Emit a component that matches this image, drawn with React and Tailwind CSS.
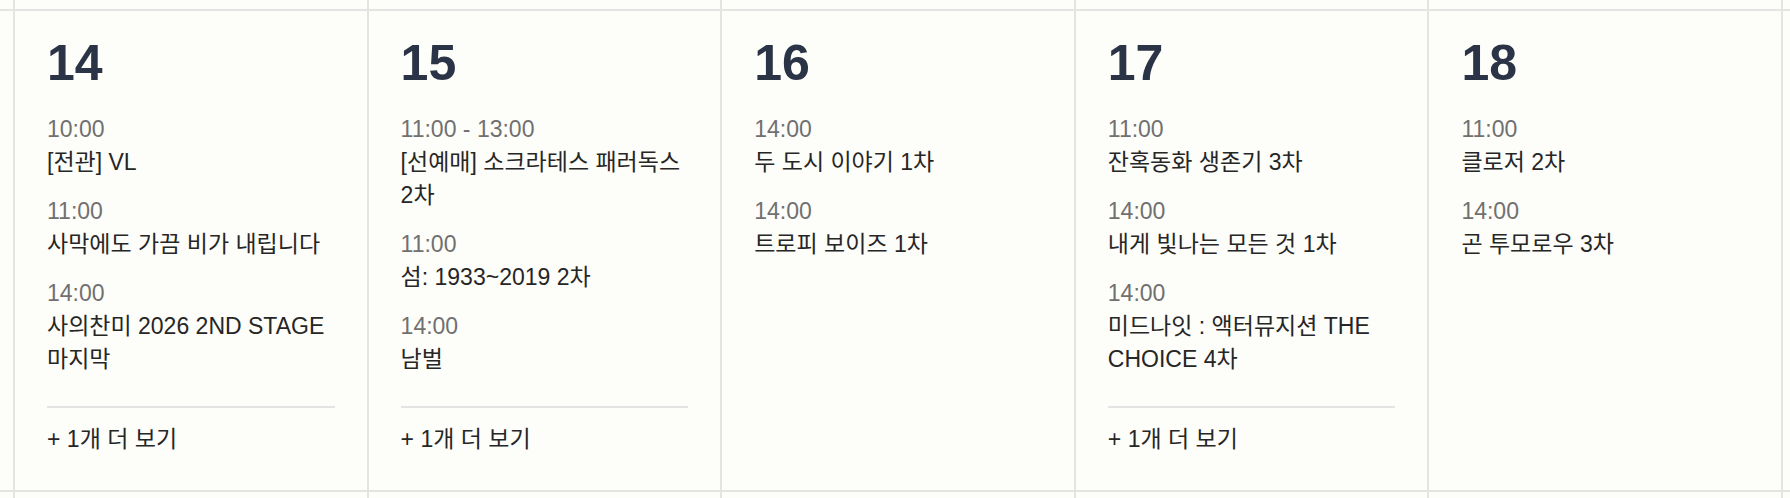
import React from "react";

const days = [
  {
    n: "14",
    items: [
      ["10:00", "[전관] VL"],
      ["11:00", "사막에도 가끔 비가 내립니다"],
      ["14:00", "사의찬미 2026 2ND STAGE 마지막"],
    ],
    more: 1,
  },
  {
    n: "15",
    items: [
      ["11:00 - 13:00", "[선예매] 소크라테스 패러독스 2차"],
      ["11:00", "섬: 1933~2019 2차"],
      ["14:00", "남벌"],
    ],
    more: 1,
  },
  {
    n: "16",
    items: [
      ["14:00", "두 도시 이야기 1차"],
      ["14:00", "트로피 보이즈 1차"],
    ],
    more: 0,
  },
  {
    n: "17",
    items: [
      ["11:00", "잔혹동화 생존기 3차"],
      ["14:00", "내게 빛나는 모든 것 1차"],
      ["14:00", "미드나잇 : 액터뮤지션 THE CHOICE 4차"],
    ],
    more: 1,
  },
  {
    n: "18",
    items: [
      ["11:00", "클로저 2차"],
      ["14:00", "곤 투모로우 3차"],
    ],
    more: 0,
  },
];

function Blank() {
  return <div className="bg-[#fdfdf9]" />;
}

function DayCell({ day }) {
  return (
    <div className="bg-[#fdfdf9] pt-[27px] px-8 flex flex-col min-w-0 break-keep">
      <div className="text-[50px] leading-none font-bold text-[#2b3447]">{day.n}</div>
      <div className="mt-[25px] flex flex-col gap-4">
        {day.items.map(([t, title], i) => (
          <div key={i} className="flex flex-col text-[23px] leading-[33px]">
            <div className="text-[#707070]">{t}</div>
            <div className="text-[#262626]">{title}</div>
          </div>
        ))}
      </div>
      {day.more > 0 && (
        <div className="mt-[30px] border-t-2 border-[#e4e4e4] pt-[15px] text-[23px] leading-[33px] text-[#262626]">
          + {day.more}개 더 보기
        </div>
      )}
    </div>
  );
}

export default function App() {
  return (
    <div
      className="w-[1790px] h-[498px] overflow-hidden bg-[#e4e4e4] grid grid-cols-[13px_repeat(5,minmax(0,1fr))_7px] grid-rows-[9px_479px_6px] gap-[2px]"
      style={{ fontFamily: '"Liberation Sans", "Noto Sans CJK KR", sans-serif' }}
    >
      {Array.from({ length: 7 }).map((_, i) => (
        <Blank key={"t" + i} />
      ))}
      <Blank />
      {days.map((d) => (
        <DayCell key={d.n} day={d} />
      ))}
      <Blank />
      {Array.from({ length: 7 }).map((_, i) => (
        <Blank key={"b" + i} />
      ))}
    </div>
  );
}
